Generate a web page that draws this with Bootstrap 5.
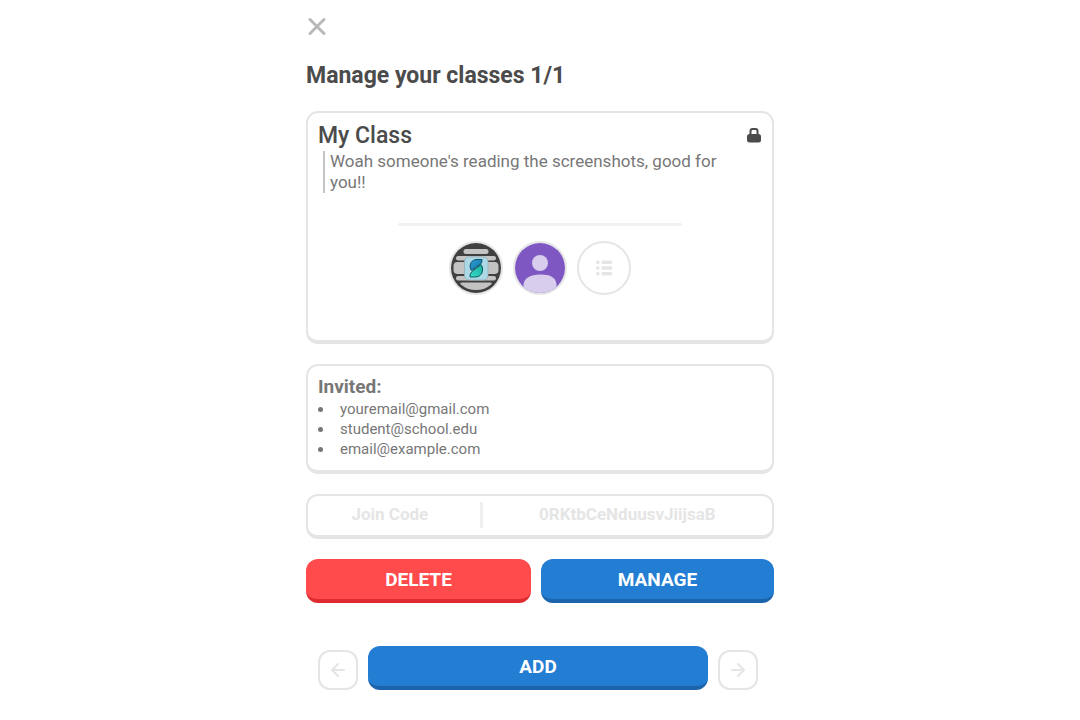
<!DOCTYPE html>
<html lang="en">
<head>
<meta charset="utf-8">
<meta name="viewport" content="width=device-width, initial-scale=1">
<title>Manage your classes</title>
<link href="https://cdn.jsdelivr.net/npm/bootstrap@5.3.0/dist/css/bootstrap.min.css" rel="stylesheet">
<style>
  body { font-family: Roboto, "Liberation Sans", sans-serif; color: #777; background: #fff; }
  .classes-panel { max-width: 468px; padding-top: 16px; }
  .close-button { color: #b9b9b9; line-height: 0; }
  .page-title { font-size: 23px; line-height: 30px; font-weight: 700; color: #4b4b4b; margin: 23px 0 20px; }
  .box { border: 2px solid #e5e5e5; border-bottom-width: 4px; border-radius: 12px; padding: 8px 10px; margin-bottom: 20px; }
  .class-box { min-height: 233px; }
  .class-name { font-size: 23px; line-height: 30px; font-weight: 500; color: #4b4b4b; }
  .lock-icon { color: #4b4b4b; margin: 6px 1px 0 0; }
  .class-description { font-size: 17px; line-height: 21px; border-left: 2px solid #c4c4c4; margin: 0 32px 0 5px; padding-left: 5px; }
  .separator { width: 284px; height: 3px; border-radius: 2px; background: #f0f0f0; margin: 30px auto 15px; }
  .avatar { width: 54px; height: 54px; border: 2px solid #e5e5e5; }
  .avatars { gap: 10px; }
  .list-button { background: #fff; color: #e5e5e5; }
  .invited-title { font-size: 19px; line-height: 25px; font-weight: 700; }
  .invited-box { min-height: 110px; }
  .invited-list { font-size: 15px; line-height: 20px; list-style: none; }
  .invited-list li { display: flex; align-items: center; gap: 17px; }
  .invited-list li::before { content: ""; width: 5px; height: 5px; border-radius: 50%; background: #777; }
  .join-box { min-height: 45px; padding: 6px 0; font-size: 17px; line-height: 24px; font-weight: 700; color: #e5e5e5; }
  .join-label { flex: 0 0 37%; padding-right: 8px; }
  .join-divider { width: 3px; height: 26px; background: #efefef; }
  .action { height: 44px; border: 0; border-radius: 12px; border-bottom: 4px solid; color: #fff; font-size: 19px; line-height: 24px; font-weight: 700; padding: 9px 12px 7px; }
  .action:hover { color: #fff; filter: brightness(1.05); }
  .action-danger, .action-danger:hover { background: #ff4b4b; border-color: #df2b2f; }
  .action-primary, .action-primary:hover { background: #237dd3; border-color: #1b64ab; }
  .actions, .pager { gap: 10px; }
  .actions { display: grid; grid-template-columns: 225fr 233fr; }
  .pager { margin-top: 43px; padding: 0 16px 0 12px; }
  .pager-button { width: 40px; height: 40px; border: 2px solid #e5e5e5; border-radius: 12px; background: #fff; color: #e5e5e5; }
</style>
</head>
<body>
<main class="classes-panel container-fluid px-0 pb-4">
  <button type="button" class="close-button btn p-0 border-0 d-block" aria-label="Close">
    <svg width="22" height="22" viewBox="0 0 22 22" fill="none" stroke="currentColor" stroke-width="3" stroke-linecap="round"><path d="M4 3.500 18 17.500M18 3.500 4 17.500"/></svg>
  </button>
  <h1 class="page-title">Manage your classes 1/1</h1>

  <section class="box class-box">
    <div class="d-flex justify-content-between align-items-start">
      <h2 class="class-name mb-0">My Class</h2>
      <svg class="lock-icon" width="14" height="16" viewBox="0 0 14 16" role="img" aria-label="Private"><path d="M3.500 8V4Q3.500 2 5.500 2h3Q10.500 2 10.500 4V8" fill="none" stroke="currentColor" stroke-width="2"/><rect y="7" width="14" height="8.500" rx="2.500" fill="currentColor"/></svg>
    </div>
    <p class="class-description">Woah someone's reading the screenshots, good for you!!</p>
    <div class="separator"></div>
    <div class="avatars d-flex justify-content-center">
      <svg class="avatar rounded-circle" viewBox="0 0 50 50" role="img" aria-label="Student with striped picture">
        <defs>
          <linearGradient id="blueFade" x1="0" y1="0" x2="1" y2="1"><stop stop-color="#2ba5dc"/><stop offset="1" stop-color="#156a9f"/></linearGradient>
          <linearGradient id="tealFade" x1="0" y1="1" x2="1" y2="0"><stop stop-color="#36dccb"/><stop offset="1" stop-color="#19ae9d"/></linearGradient>
        </defs>
        <rect width="50" height="50" fill="#404041"/>
        <g fill="#c3c3c3"><rect x="12.500" y="6" width="25" height="5" rx="2.500"/><rect x="5" y="13" width="40" height="4.500" rx="2.200"/><rect x="2.500" y="19" width="45" height="12" rx="4"/><rect x="5" y="33" width="40" height="4.500" rx="2.200"/><path d="M11 39.500h28q3 0 1 2Q34 47 25 47T10 41.500q-2-2 1-2z"/></g>
        <rect x="13.500" y="14" width="23.500" height="23" rx="4.500" fill="#abd9e5" stroke="#92aeb7" stroke-width=".8"/>
        <path d="M20.500 27.500C18 25 18.500 16.500 26 16.500h5Q31.500 20 28.500 22z" fill="url(#blueFade)" stroke="#164e69" stroke-width="1"/>
        <path d="M30 21.500C33 25 32 34 24.500 34H19Q18.500 31 21 28.500z" fill="url(#tealFade)" stroke="#125b5e" stroke-width="1"/>
      </svg>
      <svg class="avatar rounded-circle" viewBox="0 0 50 50" role="img" aria-label="Student">
        <rect width="50" height="50" fill="#7e57c2"/><circle cx="25" cy="20" r="8" fill="#d8cdec"/><path d="M8.500 50V41Q10 32 25 31.500T41.500 41V50z" fill="#d8cdec"/>
      </svg>
      <button type="button" class="avatar list-button rounded-circle p-0 d-flex align-items-center justify-content-center" aria-label="All students">
        <svg width="16" height="16" viewBox="0 0 16 16" fill="currentColor"><rect y=".5" width="3.500" height="3.500" rx="1.500"/><rect x="5.500" y=".5" width="10.500" height="3.500" rx="1"/><rect y="6.300" width="3.500" height="3.500" rx="1.500"/><rect x="5.500" y="6.300" width="10.500" height="3.500" rx="1"/><rect y="12" width="3.500" height="3.500" rx="1.500"/><rect x="5.500" y="12" width="10.500" height="3.500" rx="1"/></svg>
      </button>
    </div>
  </section>

  <section class="box invited-box">
    <h2 class="invited-title mb-0">Invited:</h2>
    <ul class="invited-list mb-0 ps-0">
      <li>youremail@gmail.com</li>
      <li>student@school.edu</li>
      <li>email@example.com</li>
    </ul>
  </section>

  <section class="box join-box d-flex text-center">
    <div class="join-label">Join Code</div>
    <div class="join-divider"></div>
    <div class="flex-grow-1">0RKtbCeNduusvJiijsaB</div>
  </section>

  <div class="actions">
    <button type="button" class="btn action action-danger">DELETE</button>
    <button type="button" class="btn action action-primary">MANAGE</button>
  </div>

  <nav class="pager d-flex align-items-end" aria-label="Classes">
    <button type="button" class="pager-button p-0 d-flex align-items-center justify-content-center" aria-label="Previous class">
      <svg width="16" height="16" viewBox="0 0 16 16" fill="none" stroke="currentColor" stroke-width="2" stroke-linecap="round" stroke-linejoin="round"><path d="M14 8H2.500M8 2 2 8l6 6"/></svg>
    </button>
    <button type="button" class="btn action action-primary flex-grow-1">ADD</button>
    <button type="button" class="pager-button p-0 d-flex align-items-center justify-content-center" aria-label="Next class">
      <svg width="16" height="16" viewBox="0 0 16 16" fill="none" stroke="currentColor" stroke-width="2" stroke-linecap="round" stroke-linejoin="round"><path d="M2 8h11.500M8 2l6 6-6 6"/></svg>
    </button>
  </nav>
</main>
<script src="https://cdn.jsdelivr.net/npm/bootstrap@5.3.0/dist/js/bootstrap.bundle.min.js"></script>
</body>
</html>
